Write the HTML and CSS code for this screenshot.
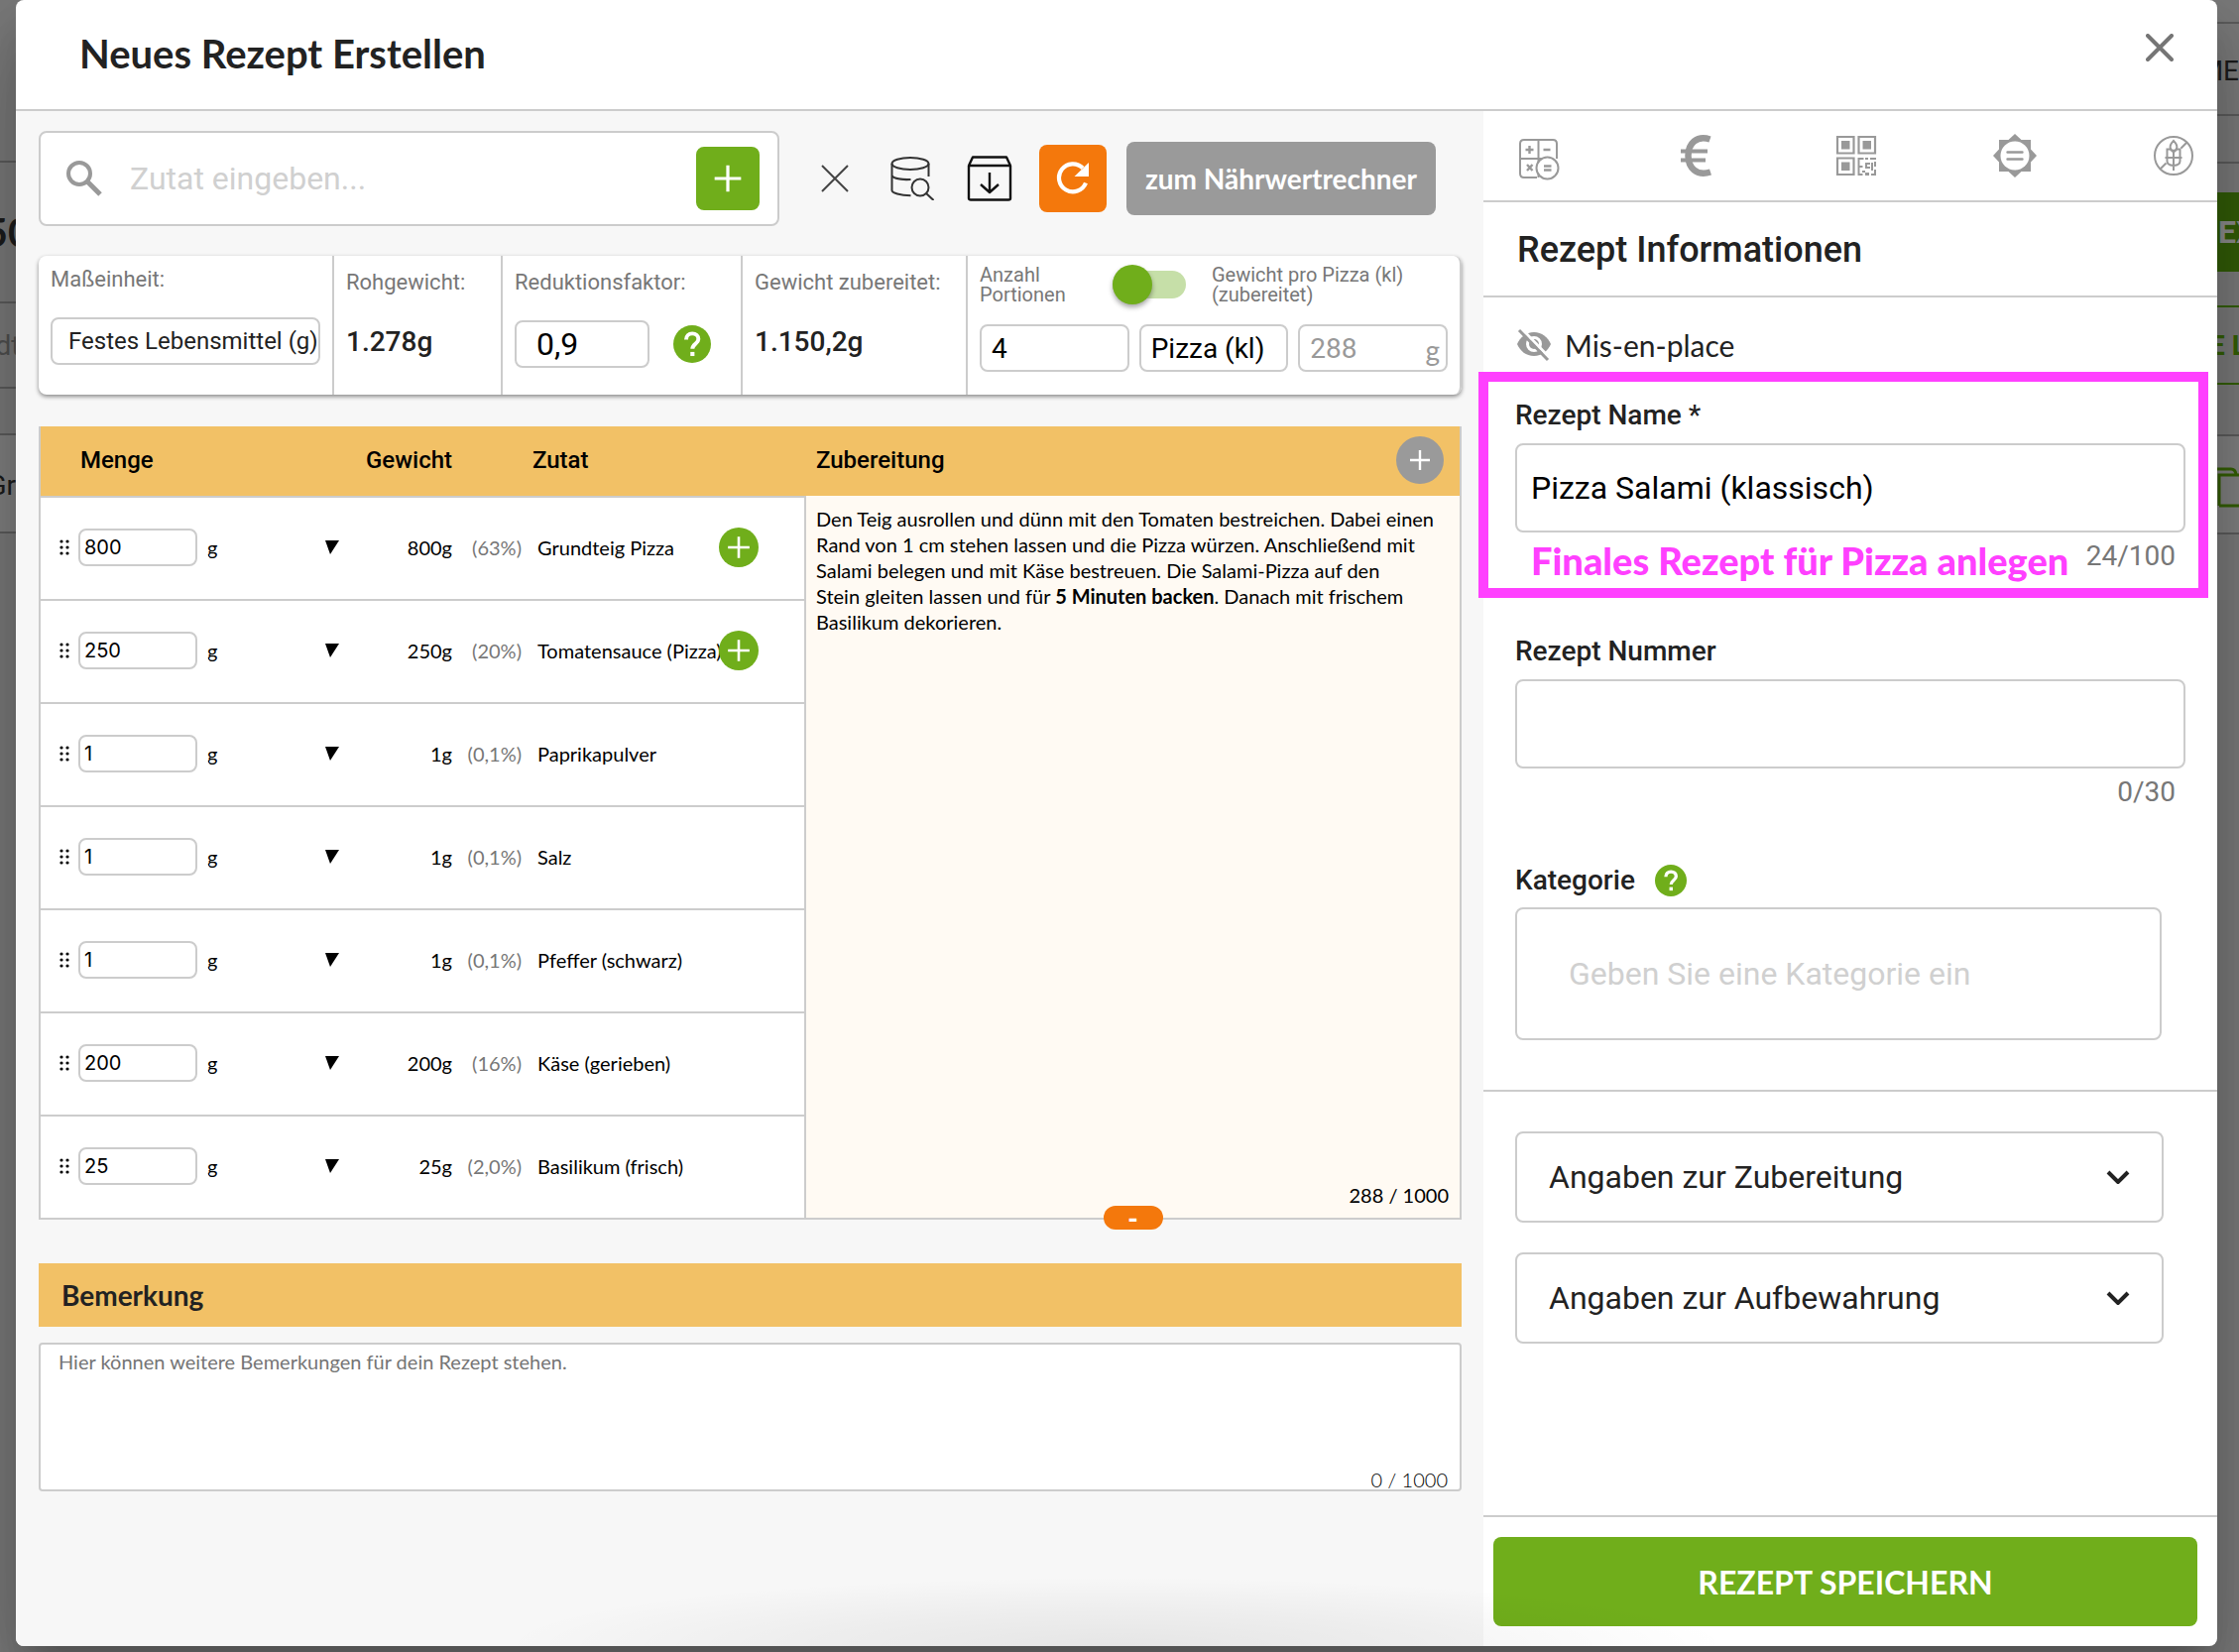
FILE: index.html
```html
<!DOCTYPE html>
<html lang="de">
<head>
<meta charset="utf-8">
<meta name="viewport" content="width=device-width, initial-scale=1">
<title>Neues Rezept Erstellen</title>
<link rel="stylesheet" href="styles.css">
</head>
<body>
<svg class="sprite" aria-hidden="true">
  <symbol id="i-plus" viewBox="0 0 24 24"><path d="M12 2v20M2 12h20" fill="none" stroke="currentColor" stroke-width="2.4"/></symbol>
  <symbol id="i-help" viewBox="0 0 24 24"><circle cx="12" cy="12" r="12" fill="#70ae1b"/><path d="M8.2 9.2c0-2.3 1.600-3.900 3.900-3.900s3.900 1.400 3.900 3.500c0 2.900-3.800 3.200-3.800 6.200" fill="none" stroke="#fff" stroke-width="2.500"/><rect x="10.900" y="17" width="2.600" height="2.600" fill="#fff"/></symbol>
  <symbol id="i-drag" viewBox="0 0 10 18"><g fill="#000"><circle cx="2" cy="3" r="1.600"/><circle cx="8" cy="3" r="1.600"/><circle cx="2" cy="9" r="1.600"/><circle cx="8" cy="9" r="1.600"/><circle cx="2" cy="15" r="1.600"/><circle cx="8" cy="15" r="1.600"/></g></symbol>
  <symbol id="i-tri" viewBox="0 0 14 14"><path d="M0 0h14L5 14z"/></symbol>
  <symbol id="i-chev" viewBox="0 0 24 14"><path d="M2 2l10 10L22 2" fill="none" stroke="#222" stroke-width="4"/></symbol>
</svg>

<div class="strip strip-left" aria-hidden="true">
  <div class="band band-a"></div>
  <div class="band band-b strip-num">50</div>
  <div class="band band-d strip-muted">dt</div>
  <div class="band band-e"></div>
  <div class="band band-f">Gr</div>
</div>

<main class="modal">
  <header class="modal-head">
    <h1>Neues Rezept Erstellen</h1>
    <button class="icon-btn close" aria-label="Schließen"><svg width="28" height="28" viewBox="0 0 28 28"><path d="M2 2l24 24M26 2L2 26" stroke="#757575" stroke-width="4" stroke-linecap="round"/></svg></button>
  </header>

  <div class="columns">
    <section class="work">
      <div class="toolbar">
        <div class="search">
          <svg width="36" height="36" viewBox="0 0 36 36"><circle cx="13" cy="13" r="11" fill="none" stroke="#999" stroke-width="4"/><path d="M21 21l13 13" stroke="#999" stroke-width="5"/></svg>
          <input type="text" aria-label="Zutat" placeholder="Zutat eingeben...">
          <button class="add-btn" aria-label="Zutat hinzufügen"><svg width="32" height="32"><use href="#i-plus"/></svg></button>
        </div>
        <div class="tools">
          <button class="icon-btn" aria-label="Leeren"><svg width="28" height="28" viewBox="0 0 28 28"><path d="M1 1l26 26M27 1L1 27" stroke="#444" stroke-width="2"/></svg></button>
          <button class="icon-btn" aria-label="Datenbank durchsuchen"><svg width="44" height="44" viewBox="0 0 44 44" fill="none" stroke="#333" stroke-width="2"><ellipse cx="20" cy="7" rx="18.500" ry="6"/><path d="M1.500 7v27c0 2.500 8 5 19 5.200M38.500 7v13M1.500 19c2 3 10 4.500 19 4"/><circle cx="30" cy="31" r="8.500"/><path d="M36 37l7.500 7"/></svg></button>
          <button class="icon-btn" aria-label="Importieren"><svg width="46" height="46" viewBox="0 0 46 46" fill="none" stroke="#111" stroke-width="2.400" stroke-linejoin="round"><path d="M2 10L6 1.500h34L44 10M2 10h42v33q0 1.500-2 1.500H4q-2 0-2-1.500zM23 17v20M14 29l9 8 9-8"/></svg></button>
        </div>
        <button class="reload-btn" aria-label="Zurücksetzen"><svg width="34" height="34" viewBox="0 0 34 34"><path d="M27 6.500A14 14 0 1 0 30 21.500" fill="none" stroke="#fff" stroke-width="4.200"/><path d="M33 1v14H18.500z" fill="#fff"/></svg></button>
        <button class="calc-btn">zum Nährwertrechner</button>
      </div>

      <div class="facts">
        <div class="fact fact-unit">
          <label for="unit">Maßeinheit:</label>
          <select id="unit"><option>Festes Lebensmittel (g)</option></select>
        </div>
        <div class="fact"><span>Rohgewicht:</span><strong>1.278g</strong></div>
        <div class="fact">
          <label for="factor">Reduktionsfaktor:</label>
          <div class="factor-row"><input id="factor" type="text" value="0,9"><svg width="38" height="38"><use href="#i-help"/></svg></div>
        </div>
        <div class="fact"><span>Gewicht zubereitet:</span><strong>1.150,2g</strong></div>
        <div class="fact fact-portions">
          <div class="switch-row">
            <label for="portions">Anzahl<br>Portionen</label>
            <input type="checkbox" class="switch" aria-label="Anzahl oder Gewicht">
            <label for="pweight">Gewicht pro Pizza (kl)<br>(zubereitet)</label>
          </div>
          <div class="portion-row">
            <input id="portions" type="text" value="4">
            <input type="text" aria-label="Einheit" value="Pizza (kl)">
            <div class="pweight"><input id="pweight" type="text" value="288" disabled><span>g</span></div>
          </div>
        </div>
      </div>

      <div class="recipe">
        <table class="ingredients">
          <colgroup><col class="c-amount"><col class="c-weight"><col class="c-share"><col></colgroup>
          <thead><tr><th>Menge</th><th class="num">Gewicht</th><th></th><th class="th-name">Zutat</th></tr></thead>
          <tbody>
            <tr><td><div class="amount"><svg width="10" height="18"><use href="#i-drag"/></svg><input type="text" aria-label="Menge Grundteig Pizza" value="800"><select aria-label="Einheit Grundteig Pizza"><option>g</option></select><svg width="14" height="14"><use href="#i-tri"/></svg></div></td><td class="num">800g</td><td class="num share">(63%)</td><td class="name">Grundteig Pizza<button class="round-btn" aria-label="Grundteig Pizza öffnen"><svg width="26" height="26"><use href="#i-plus"/></svg></button></td></tr>
            <tr><td><div class="amount"><svg width="10" height="18"><use href="#i-drag"/></svg><input type="text" aria-label="Menge Tomatensauce" value="250"><select aria-label="Einheit Tomatensauce"><option>g</option></select><svg width="14" height="14"><use href="#i-tri"/></svg></div></td><td class="num">250g</td><td class="num share">(20%)</td><td class="name">Tomatensauce (Pizza)<button class="round-btn" aria-label="Tomatensauce öffnen"><svg width="26" height="26"><use href="#i-plus"/></svg></button></td></tr>
            <tr><td><div class="amount"><svg width="10" height="18"><use href="#i-drag"/></svg><input type="text" aria-label="Menge Paprikapulver" value="1"><select aria-label="Einheit Paprikapulver"><option>g</option></select><svg width="14" height="14"><use href="#i-tri"/></svg></div></td><td class="num">1g</td><td class="num share">(0,1%)</td><td class="name">Paprikapulver</td></tr>
            <tr><td><div class="amount"><svg width="10" height="18"><use href="#i-drag"/></svg><input type="text" aria-label="Menge Salz" value="1"><select aria-label="Einheit Salz"><option>g</option></select><svg width="14" height="14"><use href="#i-tri"/></svg></div></td><td class="num">1g</td><td class="num share">(0,1%)</td><td class="name">Salz</td></tr>
            <tr><td><div class="amount"><svg width="10" height="18"><use href="#i-drag"/></svg><input type="text" aria-label="Menge Pfeffer" value="1"><select aria-label="Einheit Pfeffer"><option>g</option></select><svg width="14" height="14"><use href="#i-tri"/></svg></div></td><td class="num">1g</td><td class="num share">(0,1%)</td><td class="name">Pfeffer (schwarz)</td></tr>
            <tr><td><div class="amount"><svg width="10" height="18"><use href="#i-drag"/></svg><input type="text" aria-label="Menge Käse" value="200"><select aria-label="Einheit Käse"><option>g</option></select><svg width="14" height="14"><use href="#i-tri"/></svg></div></td><td class="num">200g</td><td class="num share">(16%)</td><td class="name">Käse (gerieben)</td></tr>
            <tr><td><div class="amount"><svg width="10" height="18"><use href="#i-drag"/></svg><input type="text" aria-label="Menge Basilikum" value="25"><select aria-label="Einheit Basilikum"><option>g</option></select><svg width="14" height="14"><use href="#i-tri"/></svg></div></td><td class="num">25g</td><td class="num share">(2,0%)</td><td class="name">Basilikum (frisch)</td></tr>
          </tbody>
        </table>
        <div class="prep">
          <div class="prep-head"><h2>Zubereitung</h2><button class="round-btn prep-add" aria-label="Schritt hinzufügen"><svg width="24" height="24"><use href="#i-plus"/></svg></button></div>
          <p class="prep-text">Den Teig ausrollen und dünn mit den Tomaten bestreichen. Dabei einen Rand von 1 cm stehen lassen und die Pizza würzen. Anschließend mit Salami belegen und mit Käse bestreuen. Die Salami-Pizza auf den<br>Stein gleiten lassen und für <b>5 Minuten backen</b>. Danach mit frischem Basilikum dekorieren.</p>
          <div class="prep-count">288 / 1000</div>
          <button class="prep-remove" aria-label="Schritt entfernen">-</button>
        </div>
      </div>

      <h2 class="note-head"><label for="note">Bemerkung</label></h2>
      <div class="note">
        <textarea id="note" placeholder="Hier können weitere Bemerkungen für dein Rezept stehen."></textarea>
        <span class="note-count">0 / 1000</span>
      </div>
    </section>

    <aside class="side">
      <nav class="tabs">
        <button class="icon-btn" aria-label="Nährwerte"><svg width="44" height="44" viewBox="0 -4 44 44" overflow="visible" fill="none" stroke="#999" stroke-width="2"><path d="M20 40H7q-4 0-4-4V6q0-4 4-4h29q4 0 4 4v15M21.500 2v38M3 21h27"/><circle cx="30.500" cy="30.500" r="11" fill="#fff"/><path d="M8.500 12h8M12.500 8v8M26.500 12h7M27 28.500h7.500M27 32.500h7.500" stroke-width="2.400"/><path d="M10 27l5.500 6M15.500 27L10 33" stroke-width="2.400"/></svg></button>
        <button class="icon-btn" aria-label="Kosten"><svg width="44" height="44" viewBox="0 0 44 44" fill="none" stroke="#999"><path d="M34.500 5.500C21 1 12.500 10 12.500 22s8.500 21 22.500 16.500" stroke-width="6.500"/><path d="M5 17.500h27M5 26.500h25" stroke-width="4.200"/></svg></button>
        <button class="icon-btn" aria-label="QR-Code"><svg width="44" height="44" viewBox="0 0 44 44"><g fill="none" stroke="#999" stroke-width="2.200"><path d="M3 3h16.500v16.500H3zM24.500 3H41v16.500H24.500zM3 24.500h16.500V41H3z"/></g><path d="M7 7h8.500v8.500H7zM28.500 7H37v8.500h-8.500zM7 28.500h8.500V37H7zM23.500 24h6v2h-4v6h3v2h-3v6h3v2h-5zM31 24h3v2h-3zM36 24h6v2h-6zM31 29h5v2h-3v2h3v2h-5zM37 29h2v8h-2zM40 28h2v5h-2zM40 36h2v6h-5v-2h3zM28 37h3v2h-3zM31 39h4v3h-4z" fill="#999"/></svg></button>
        <button class="icon-btn" aria-label="Siegel"><svg width="44" height="44" viewBox="0 0 44 44"><path d="M22 0l6.500 6H38v9.500l6 6.500-6 6.500V38h-9.500L22 44l-6.500-6H6v-9.500L0 22l6-6.500V6h9.500z" fill="#999"/><circle cx="22" cy="22" r="14.500" fill="#fff"/><path d="M14.500 18.500h15M14.500 25.500h15" stroke="#999" stroke-width="2.400" stroke-linecap="round"/></svg></button>
        <button class="icon-btn" aria-label="Allergene"><svg width="44" height="44" viewBox="0 0 44 44" fill="none" stroke="#999" stroke-width="2"><circle cx="22" cy="22" r="19"/><path d="M8.500 35.500l6-6M29.500 14.500l6-6M22 7c-5 5-4 9 0 10 4-1 5-5 0-10zM14.500 15.500h4l3.500 3 3.500-3h4M15.500 15.500v12q0 4 6.500 4.500 6.500-.5 6.500-4.500v-12M13.500 24h17M22 18v19"/></svg></button>
      </nav>
      <h2 class="side-title">Rezept Informationen</h2>
      <form class="form">
        <button type="button" class="mise"><svg width="38" height="36" viewBox="0 0 38 36"><path d="M19 5c8 0 14 5 17 12-3 7-9 12-17 12S5 24 2 17C5 10 11 5 19 5z" fill="#999"/><circle cx="19" cy="17" r="6.500" fill="none" stroke="#fff" stroke-width="3"/><path d="M5 0l30 31" stroke="#fff" stroke-width="3"/><path d="M4 3l29 30" stroke="#999" stroke-width="3"/></svg>Mis-en-place</button>

        <div class="field marked">
          <label for="rname">Rezept Name *</label>
          <input id="rname" type="text" value="Pizza Salami (klassisch)">
          <div class="hint"><span class="annotation">Finales Rezept für Pizza anlegen</span><span class="count">24/100</span></div>
        </div>
        <div class="field">
          <label for="rnum">Rezept Nummer</label>
          <input id="rnum" type="text">
          <div class="hint"><span class="count">0/30</span></div>
        </div>
        <div class="field field-cat">
          <label for="rcat">Kategorie <svg width="32" height="32"><use href="#i-help"/></svg></label>
          <input id="rcat" type="text" placeholder="Geben Sie eine Kategorie ein">
        </div>
        <div class="folds">
          <button type="button" class="fold" aria-expanded="false">Angaben zur Zubereitung<svg width="24" height="14"><use href="#i-chev"/></svg></button>
          <button type="button" class="fold" aria-expanded="false">Angaben zur Aufbewahrung<svg width="24" height="14"><use href="#i-chev"/></svg></button>
        </div>
      </form>
      <footer class="side-foot"><button class="save">REZEPT SPEICHERN</button></footer>
    </aside>
  </div>
  <div class="glow"></div>
</main>

<div class="strip strip-right" aria-hidden="true">
  <div class="band band-top"></div>
  <div class="band band-menu">ME</div>
  <div class="band band-c"></div>
  <div class="strip-solid">EX</div>
  <div class="strip-outline">E L</div>
  <div class="band band-g"></div>
  <div class="band band-f"><svg width="30" height="42" viewBox="0 0 30 42" fill="none" stroke="#345f05" stroke-width="3"><path d="M2 40V9h34M2 40h40M0 3h14q4 0 5 5"/></svg></div>
</div>
</body>
</html>
```
FILE: styles.css
```css
:root {
  --line: #ccc;
  --green: #70ae1b;
  --orange: #f4780c;
  --amber: #f2c166;
  --grey: #9a9a9a;
  --ink: #222;
  --muted: #777;
  --roboto: Roboto, "Liberation Sans", sans-serif;
  --lato: Lato, "Liberation Sans", sans-serif;
}

* { box-sizing: border-box; }

body {
  margin: 0;
  min-height: 100vh;
  display: grid;
  grid-template-columns: 16px minmax(0, 1fr) 22px;
  background: #7a7a7a;
  color: var(--ink);
  font-family: var(--roboto);
  overflow: hidden;
}

h1, h2, p { margin: 0; }
svg { display: block; flex: none; }
.sprite { position: absolute; width: 0; height: 0; }

button, input, select, textarea {
  margin: 0;
  font-family: inherit;
  color: inherit;
}

button { padding: 0; border: 0; background: none; cursor: pointer; }

input, select, textarea {
  min-width: 0;
  border: 2px solid var(--line);
  border-radius: 8px;
  background: #fff;
  outline: 0;
}

select { appearance: none; }
::placeholder { color: #d0d0d0; opacity: 1; }

.icon-btn {
  width: 44px;
  height: 44px;
  display: flex;
  align-items: center;
  justify-content: center;
}

/* dimmed page behind the dialog */
.strip { overflow: hidden; color: #1c1c1c; font-size: 28px; white-space: nowrap; }

.band {
  display: flex;
  align-items: center;
  justify-content: center;
  border-bottom: 2px solid #5c5c5c;
}

.band-a { height: 164px; }
.band-b { height: 142px; }
.band-c { height: 48px; }
.band-d { height: 86px; }
.band-e { height: 47px; }
.band-f { height: 99px; padding-top: 4px; background: #808080; }
.band-g { height: 52px; }
.band-top { height: 24px; }
.band-menu { height: 93px; padding-top: 4px; justify-content: flex-end; }
.strip-num { font: 700 40px var(--lato); }
.strip-muted { color: #505050; }
.strip-left .band-f { justify-content: flex-end; }
.strip-right .band-f { justify-content: flex-start; }

.strip-solid {
  height: 80px;
  margin-top: 29px;
  padding-left: 1px;
  line-height: 80px;
  background: #325c08;
  color: #8c8c8c;
  font-size: 32px;
  font-weight: 700;
}

.strip-outline {
  display: flex;
  align-items: center;
  justify-content: center;
  height: 80px;
  margin-top: 34px;
  border: solid #345f05;
  border-width: 2px 0;
  color: #345f05;
  font-weight: 700;
}

/* dialog */
.modal {
  position: relative;
  display: flex;
  flex-direction: column;
  min-height: calc(100vh - 6px);
  margin-bottom: 6px;
  border-radius: 8px;
  background: #fff;
  box-shadow: 0 22px 30px -14px rgba(0, 0, 0, .2), 0 48px 76px 6px rgba(0, 0, 0, .14), 0 18px 92px 16px rgba(0, 0, 0, .12);
  clip-path: inset(0 -100px -100px -100px);
}

.modal-head {
  display: flex;
  align-items: center;
  justify-content: space-between;
  height: 112px;
  padding: 0 36px 2px 64px;
  border-bottom: 2px solid var(--line);
}

.modal-head h1 { font: 700 40px/48px var(--lato); }
.close { margin-bottom: 12px; }

.columns { flex: 1; display: grid; grid-template-columns: minmax(0, 2fr) minmax(0, 1fr); }

.work {
  padding: 20px 22px 0 23px;
  border-radius: 0 0 0 8px;
  background: #f7f7f7;
}

.toolbar { display: flex; align-items: center; padding-right: 26px; }

.search {
  flex: 1;
  display: flex;
  align-items: center;
  min-width: 0;
  height: 96px;
  margin-right: 34px;
  padding: 0 18px 0 26px;
  border: 2px solid var(--line);
  border-radius: 8px;
  background: #fff;
}

.search input { flex: 1; padding: 0 28px; border: 0; font-size: 32px; }

.add-btn, .reload-btn {
  display: flex;
  align-items: center;
  justify-content: center;
  border-radius: 8px;
  color: #fff;
}

.add-btn { width: 64px; height: 64px; background: var(--green); }
.tools { display: flex; gap: 34px; margin-right: 28px; }
.reload-btn { width: 68px; height: 68px; margin-right: 20px; background: var(--orange); }

.calc-btn {
  height: 74px;
  padding: 0 19px;
  border-radius: 8px;
  background: var(--grey);
  color: #fff;
  font: 700 28px var(--lato);
}

.facts {
  display: grid;
  grid-template-columns: 298fr 170fr 242fr 227fr 498fr;
  height: 140px;
  margin-top: 30px;
  border-radius: 8px;
  background: #fff;
  box-shadow: 0 2px 4px rgba(0, 0, 0, .45);
}

.fact {
  display: flex;
  flex-direction: column;
  gap: 24px;
  min-width: 0;
  padding: 13px 12px 0;
  border-right: 2px solid var(--line);
}

.fact > label, .fact > span { color: var(--muted); font-size: 22px; line-height: 28px; }
.fact strong { height: 48px; font-size: 28px; font-weight: 500; line-height: 44px; }
.fact-unit { padding-top: 10px; }
.fact-unit select { height: 48px; padding: 0 0 0 16px; font-size: 24px; }
.factor-row { display: flex; align-items: center; gap: 24px; }
.factor-row input { width: 136px; height: 48px; padding: 0 20px; color: #000; font-size: 32px; }
.fact-portions { gap: 20px; padding-top: 9px; border-radius: 0 8px 8px 0; }
.switch-row { display: flex; align-items: center; height: 40px; }
.switch-row label { color: var(--muted); font-size: 20px; line-height: 20px; }
.switch-row label:first-child { width: 134px; }

.switch {
  appearance: none;
  display: flex;
  align-items: center;
  width: 74px;
  height: 28px;
  margin-right: 26px;
  border: 0;
  border-radius: 14px;
  background: #c6dfa8;
}

.switch::before {
  content: "";
  width: 40px;
  height: 40px;
  flex: none;
  border-radius: 50%;
  background: var(--green);
  box-shadow: 0 3px 5px rgba(0, 0, 0, .35);
}

.portion-row { display: grid; grid-template-columns: repeat(3, 1fr); gap: 10px; }
.portion-row input { width: 100%; height: 48px; padding: 0 10px; color: #000; font-size: 28px; }
.pweight { position: relative; }
.pweight input:disabled { color: #999; }
.pweight span { position: absolute; right: 8px; top: 8px; color: #999; font: 28px/36px var(--lato); }

.recipe {
  display: grid;
  grid-template-columns: 772fr 659fr;
  margin-top: 32px;
  border: solid var(--line);
  border-width: 0 2px;
  font: 20px/26px var(--lato);
  color: #000;
}

.ingredients {
  width: 100%;
  table-layout: fixed;
  border-collapse: separate;
  border-spacing: 0;
  background: #fff;
}

.c-amount { width: 310px; }
.c-weight { width: 105px; }
.c-share { width: 70px; }

.ingredients th {
  height: 72px;
  padding: 0 0 2px 40px;
  border-bottom: 2px solid var(--line);
  background: var(--amber);
  font: 500 24px/28px var(--roboto);
  text-align: left;
}

.ingredients td { height: 104px; padding: 0 0 2px; border-bottom: 2px solid var(--line); }
.ingredients td:last-child { border-right: 2px solid var(--line); }
.ingredients .num { padding-left: 0; text-align: right; }
.ingredients .th-name { padding-left: 11px; }
.ingredients .share { color: var(--muted); }
.ingredients .name { position: relative; padding-left: 16px; }

.amount { display: flex; align-items: center; padding: 0 9px 0 19px; }
.amount input { flex: none; width: 120px; height: 38px; margin: 0 10px 0 9px; padding: 0 4px; font: 20px Inter, sans-serif; }
.amount select { flex: 1; border: 0; padding: 0; font: 20px/26px var(--lato); }

.round-btn {
  display: flex;
  align-items: center;
  justify-content: center;
  width: 40px;
  height: 40px;
  border-radius: 50%;
  background: var(--green);
  color: #fff;
}

.name .round-btn { position: absolute; right: 46px; top: 30px; }

.prep { position: relative; display: flex; flex-direction: column; border-bottom: 2px solid var(--line); background: #fffaf3; }

.prep-head {
  display: flex;
  align-items: center;
  justify-content: space-between;
  height: 70px;
  padding: 0 16px 2px 10px;
  background: var(--amber);
}

.prep-head h2 { font: 500 24px/28px var(--roboto); }
.prep-add { width: 48px; height: 48px; background: var(--grey); }
.prep-text { flex: 1; padding: 10px 16px 0 10px; }
.prep-count { padding: 0 11px 10px; text-align: right; }

.prep-remove {
  position: absolute;
  right: 0;
  bottom: -12px;
  left: 0;
  width: 60px;
  height: 24px;
  margin: 0 auto;
  border-radius: 12px;
  background: var(--orange);
  color: #fff;
  font: 900 28px/24px var(--lato);
}

.note-head {
  margin-top: 44px;
  padding: 0 23px;
  background: var(--amber);
  font: 700 28px/64px var(--lato);
}

.note { position: relative; margin-top: 16px; }

.note textarea {
  display: block;
  width: 100%;
  height: 150px;
  padding: 4px 18px;
  border-radius: 4px;
  font: 20px/26px var(--lato);
  resize: none;
}

.note textarea::placeholder { color: #757575; }
.note-count { position: absolute; right: 14px; bottom: 0; font: 300 20px/24px var(--lato); color: #000; }

/* right-hand column */
.side { display: flex; flex-direction: column; }

.tabs {
  display: flex;
  align-items: center;
  justify-content: space-between;
  height: 92px;
  padding: 0 22px 0 34px;
  border-bottom: 2px solid var(--line);
}

.side-title {
  height: 96px;
  padding: 0 34px;
  border-bottom: 2px solid var(--line);
  font-size: 36px;
  font-weight: 500;
  line-height: 96px;
}

.form { padding: 30px 32px 0; }

.mise {
  display: flex;
  align-items: center;
  gap: 12px;
  margin-bottom: 37px;
  font: 30px/36px var(--lato);
}

.field { display: flex; flex-direction: column; }
.field > label { display: flex; align-items: center; gap: 20px; margin-bottom: 12px; font-size: 28px; font-weight: 500; line-height: 32px; }
.field input { height: 90px; padding: 0 14px; color: #000; font-size: 32px; }
.hint { display: flex; height: 40px; margin-top: 8px; padding-right: 10px; }
.count { margin-left: auto; color: var(--muted); font-size: 28px; line-height: 32px; }

/* coloured call-out drawn round the name field */
.marked { position: relative; margin-bottom: 56px; }

.marked::after {
  content: "";
  position: absolute;
  inset: -28px -23px -18px -37px;
  border: 10px solid #ff40ff;
  pointer-events: none;
}

.annotation { padding-left: 16px; color: #ff40ff; font: 900 38px/40px var(--lato); white-space: nowrap; }

.field-cat { margin-top: 49px; padding-right: 24px; }
.field-cat > label { margin-bottom: 11px; }
.field-cat input { height: 134px; padding: 0 52px; }

.folds {
  display: flex;
  flex-direction: column;
  gap: 30px;
  margin: 50px -32px 0;
  padding: 40px 54px 40px 32px;
  border-top: 2px solid var(--line);
}

.fold {
  display: flex;
  align-items: center;
  justify-content: space-between;
  height: 92px;
  padding: 0 32px;
  border: 2px solid var(--line);
  border-radius: 8px;
  font-size: 32px;
}

.side-foot { margin-top: auto; padding: 20px 20px 20px 10px; border-top: 2px solid var(--line); }

.save {
  width: 100%;
  height: 90px;
  border-radius: 8px;
  background: var(--green);
  color: #fff;
  font: 700 32px var(--lato);
}

/* soft shade rising from the lower edge */
.glow {
  position: absolute;
  right: 0;
  bottom: 0;
  left: 0;
  height: 70px;
  background: radial-gradient(ellipse 620px 70px at 50% 100%, rgba(0, 0, 0, .07), rgba(0, 0, 0, .04) 50%, transparent);
  pointer-events: none;
}
```
